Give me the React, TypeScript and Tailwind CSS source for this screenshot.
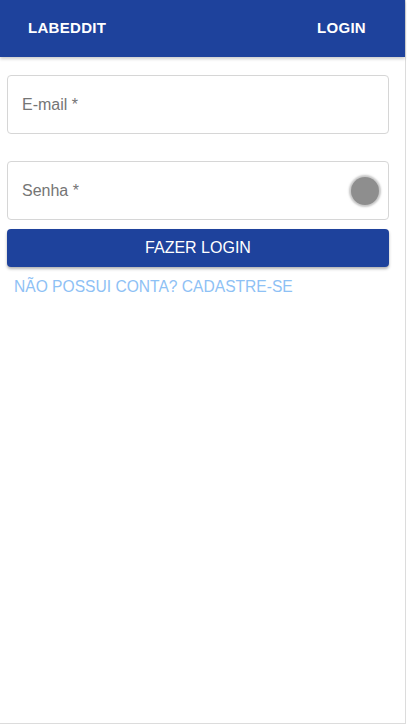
import React from "react";

export default function App() {
  return (
    <div className="w-[407px] h-[727px] bg-white relative overflow-hidden" style={{ fontFamily: '"Liberation Sans", Arial, sans-serif' }}>
      <div className="w-[406px] h-[724px] border-r border-b border-[#dcdcdc] flex flex-col">
        <header className="h-[57px] bg-[#1e429c] flex items-center justify-between pl-[28px] pr-[39px] shadow-[0_2px_3px_rgba(0,0,0,0.2)] shrink-0">
          <span className="text-white font-bold text-[15px] tracking-[0.3px]">LABEDDIT</span>
          <span className="text-white font-bold text-[15px] tracking-[0.3px]">LOGIN</span>
        </header>
        <div className="pl-[7px] pr-[16px] pt-[18px] flex flex-col">
          <div className="h-[59px] border border-[#d6d6d6] rounded-[4px] flex items-center px-[14px]">
            <span className="text-[#757575] text-[16px]">E-mail *</span>
          </div>
          <div className="h-[59px] mt-[27px] border border-[#d6d6d6] rounded-[4px] flex items-center justify-between pl-[14px] pr-[9px]">
            <span className="text-[#757575] text-[16px]">Senha *</span>
            <div className="w-[28px] h-[28px] rounded-full bg-[#8e8e8e] shadow-[0_0_2px_2px_rgba(160,160,160,0.6)]" />
          </div>
          <button className="mt-[9px] h-[38px] w-full bg-[#1e429c] rounded-[4px] text-white text-[16px] shadow-[0_2px_3px_rgba(0,0,0,0.3)] flex items-center justify-center">
            FAZER LOGIN
          </button>
          <div className="mt-[8px] pl-[7px] text-[15.6px] text-[#8ec1f5]">NÃO POSSUI CONTA? CADASTRE-SE</div>
        </div>
      </div>
    </div>
  );
}
